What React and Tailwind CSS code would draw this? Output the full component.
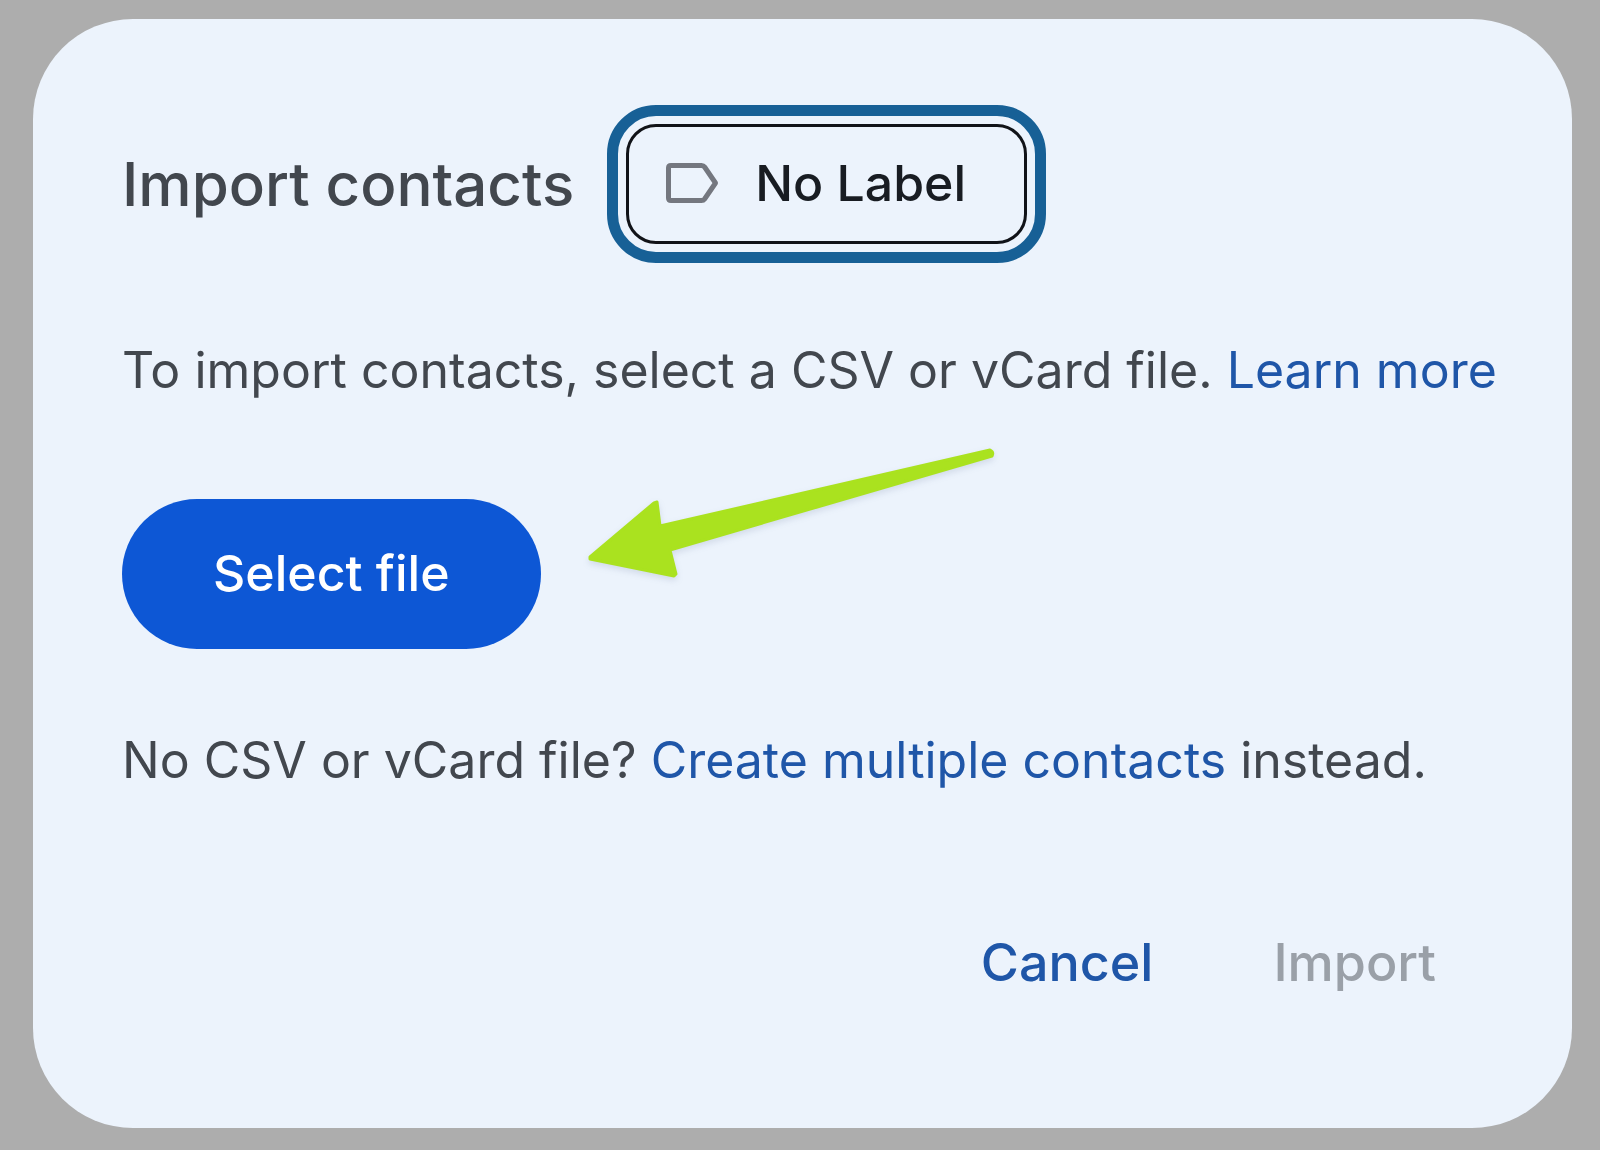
import { useState } from 'react';

function LabelIcon(){
  return (
    <svg width={54} height={42} viewBox="0 0 54 42" fill="none" className="shrink-0 text-[#74777f]" aria-hidden="true">
      <path d="M6 3.5H36.5Q38.5 3.5 39.6 5L50.5 21L39.6 37Q38.5 38.5 36.5 38.5H6Q3.5 38.5 3.5 36V6Q3.5 3.5 6 3.5Z" stroke="currentColor" strokeWidth={5} strokeLinejoin="round" />
    </svg>
  )
}

function Arrow(){
  return (
    <svg width={416} height={146} viewBox="0 0 416 146" className="absolute left-full -top-[59px] ml-[42px] max-w-none drop-shadow-[0_3px_3px_rgba(60,80,120,0.15)]" aria-hidden="true">
      <path d="M7 117L71 63L74 62L77 86L407 10Q411 12 409 16L87 110L93 134L91 136L7 119Z" fill="#aae21f" stroke="#aae21f" strokeWidth={3} strokeLinejoin="round" />
    </svg>
  )
}

function App(){
  const [file, setFile] = useState(null)

  return (
    <main className="min-h-screen bg-[#adadad] pt-[19px] pr-7 pb-[22px] pl-[33px] flex font-['Inter',sans-serif] text-[50px] leading-[72px] text-[#42474e]">
      <section role="dialog" aria-labelledby="title" className="w-full rounded-[100px] bg-[#ecf3fc] py-[105px] pl-[89px] pr-[76px] flex flex-col">
        <header className="flex items-center gap-[52px]">
          <h1 id="title" className="text-[60px] font-medium whitespace-nowrap">Import contacts</h1>
          <button type="button" className="h-[120px] pl-9 pr-[58px] pb-[2px] flex items-center gap-9 rounded-[30px] border-[3px] border-[#111318] outline-[11px] outline-offset-8 outline-[#176096] font-medium text-[#181c22] whitespace-nowrap">
            <LabelIcon />
            No Label
          </button>
        </header>

        <p className="mt-[90px] whitespace-nowrap">
          To import contacts, select a CSV or vCard file. <a href="#learn" className="text-[#1f56a8]">Learn more</a>
        </p>

        <div className="relative mt-[93px] self-start">
          <button type="button" onClick={() => setFile("contacts.csv")} className="h-[150px] px-[91px] pb-[2px] rounded-full bg-[#0d57d5] text-white font-medium whitespace-nowrap">
            Select file
          </button>
          <Arrow />
        </div>

        <p className="mt-[75px] whitespace-nowrap">
          No CSV or vCard file? <a href="#create" className="text-[#1f56a8]">Create multiple contacts</a> instead.
        </p>

        <footer className="mt-auto flex justify-end text-[52px]">
          <button type="button" onClick={() => setFile(null)} className="h-[120px] px-[60px] font-medium text-[#1f56a8]">Cancel</button>
          <button type="button" disabled={!file} className="h-[120px] px-[60px] font-medium text-[#1f56a8] disabled:text-[#9aa0a8]">Import</button>
        </footer>
      </section>
    </main>
  )
}

export default App;
